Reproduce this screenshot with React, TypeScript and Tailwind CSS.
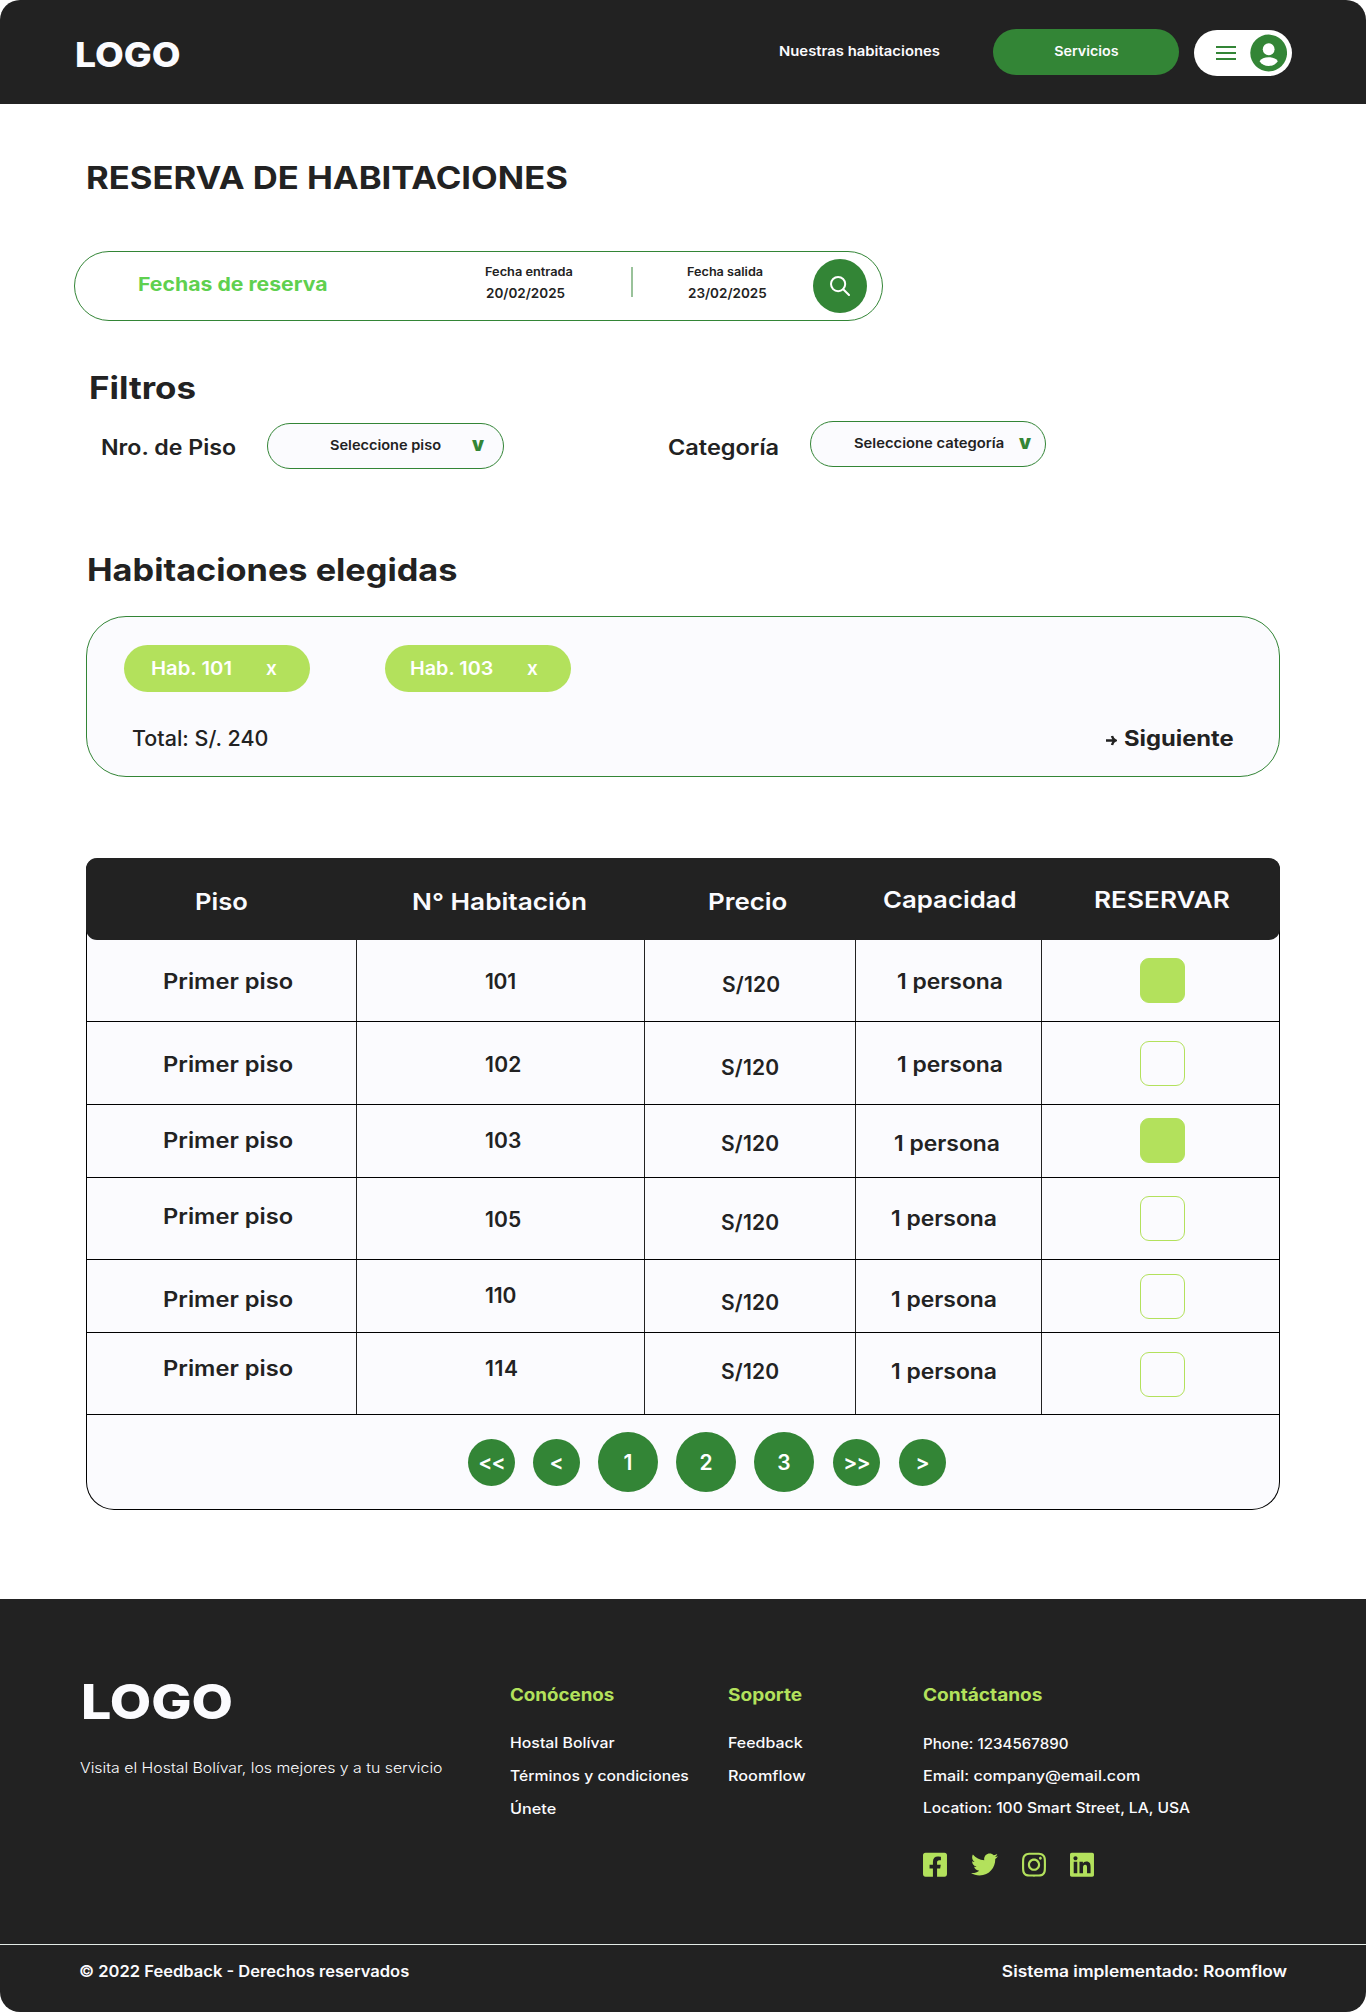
import React from "react";
import { FaFacebookSquare, FaTwitter, FaInstagram, FaLinkedin } from "react-icons/fa";

/* Text set slightly extended, growing from its left edge. */
function Wide({ className, children }: { className: string; children: React.ReactNode }) {
  return <span className={`inline-block w-max origin-left ${className}`}>{children}</span>;
}

function Header() {
  return (
    <header className="flex h-[104px] items-start rounded-t-[20px] bg-[#222222] text-[#fbfbfe]">
      <div className="mt-[37px] w-[704px] pl-[75px] text-[34.5px] leading-9 font-extrabold">
        <Wide className="scale-x-[1.08]">LOGO</Wide>
      </div>
      <a className="mt-[41px] ml-[75px] w-[214px] text-[13.5px] leading-5 font-semibold">
        <Wide className="scale-x-[1.1]">Nuestras habitaciones</Wide>
      </a>
      <button className="mt-[29px] flex h-[46px] w-[186px] items-center justify-center rounded-full bg-[#338536] pb-0.5 text-[13.5px] leading-5 font-semibold">
        <span className="scale-x-[1.06]">Servicios</span>
      </button>
      <div className="mt-[30px] ml-[15px] flex h-[46px] w-[98px] items-center rounded-full bg-white pr-[5px] pl-[22px]">
        <span className="flex w-5 flex-col gap-1">
          <span className="h-0.5 bg-[#338536]" />
          <span className="h-0.5 bg-[#338536]" />
          <span className="h-0.5 bg-[#338536]" />
        </span>
        <svg className="ml-3.5 size-[38px]" viewBox="0 0 38 38">
          <circle cx="19" cy="19" r="18.7" fill="#338536" />
          <circle cx="19" cy="15.2" r="6" fill="#fff" />
          <path d="M9.7 27.4c1.6-2.6 5-4 9.300-4s7.700 1.400 9.300 4c-2 3-5.400 4.800-9.300 4.800s-7.300-1.800-9.300-4.800z" fill="#fff" />
        </svg>
      </div>
    </header>
  );
}

function SearchBar() {
  return (
    <div className="mt-[57px] ml-[74px] flex h-[70px] w-[809px] items-start rounded-full border border-[#338536] pl-[63px]">
      <div className="mt-[23px] w-[347px] text-[19px] leading-5 font-bold text-[#5fd04f]">
        <Wide className="scale-x-[1.117]">Fechas de reserva</Wide>
      </div>
      <div className="mt-3 flex w-[146px] flex-col gap-[5px] leading-4 font-semibold">
        <Wide className="scale-x-[1.11] text-[11.5px]">Fecha entrada</Wide>
        <span className="pl-px text-[13.5px]">20/02/2025</span>
      </div>
      <span className="mt-[15px] h-[30px] w-0.5 bg-[#338536]/50" />
      <div className="mt-3 ml-[54px] flex w-[126px] flex-col gap-[5px] leading-4 font-semibold">
        <Wide className="scale-x-[1.1] text-[11.5px]">Fecha salida</Wide>
        <span className="pl-px text-[13.5px]">23/02/2025</span>
      </div>
      <button className="mt-[7px] flex size-[54px] items-center justify-center rounded-full bg-[#338536]">
        <svg className="size-5" viewBox="0 0 20 20" fill="none" stroke="#fff" strokeWidth="2" strokeLinecap="round">
          <circle cx="8.1" cy="8.1" r="7.1" />
          <path d="M13.200 13.200L19 19" />
        </svg>
      </button>
    </div>
  );
}

function Filters() {
  return (
    <div className="mt-[17px] flex h-12 items-start pl-[101px]">
      <div className="mt-[15px] w-[166px] text-[21px] leading-6 font-semibold">
        <Wide className="scale-x-[1.104]">Nro. de Piso</Wide>
      </div>
      <button className="mt-0.5 flex h-[46px] w-[237px] items-start rounded-full border border-[#338536] bg-[#fbfbfe] pl-[62px] text-left leading-5">
        <div className="mt-[11px] w-[142px] text-[13.5px] font-semibold">
          <Wide className="scale-x-[1.078]">Seleccione piso</Wide>
        </div>
        <span className="mt-[11px] text-[19px] font-black text-[#338536]">v</span>
      </button>
      <div className="mt-[15px] ml-[164px] w-[142px] text-[21px] leading-6 font-semibold">
        <Wide className="scale-x-[1.12]">Categoría</Wide>
      </div>
      <button className="flex h-[46px] w-[236px] items-start rounded-full border border-[#338536] bg-[#fbfbfe] pl-[43px] text-left leading-5">
        <div className="mt-[11px] w-[165px] text-[13.5px] font-semibold">
          <Wide className="scale-x-[1.094]">Seleccione categoría</Wide>
        </div>
        <span className="mt-[11px] text-[19px] font-black text-[#338536]">v</span>
      </button>
    </div>
  );
}

function Selection() {
  return (
    <section className="mx-[86px] mt-[30px] h-[161px] rounded-[40px] border border-[#338536] bg-[#fbfbfe] pt-7">
      <div className="flex gap-[75px] pl-[37px] text-[19px] leading-5 font-semibold text-white">
        <div className="flex h-[47px] w-[186px] items-center rounded-full bg-[#b3e15c] pt-px pl-[27px]">
          <div className="w-[115px]">
            <Wide className="scale-x-[1.066]">Hab. 101</Wide>
          </div>
          <span>x</span>
        </div>
        <div className="flex h-[47px] w-[186px] items-center rounded-full bg-[#b3e15c] pt-px pl-[25px]">
          <div className="w-[117px]">
            <Wide className="scale-x-[1.04]">Hab. 103</Wide>
          </div>
          <span>x</span>
        </div>
      </div>
      <div className="mt-[35px] flex items-center justify-between pr-11 pl-[45px] text-[21px] leading-6">
        <Wide className="scale-x-[1.022] font-medium">Total: S/. 240</Wide>
        <a className="flex items-center gap-[7px] font-bold">
          <svg className="mt-0.5 size-[11px]" viewBox="0 0 11 11" fill="none" stroke="#222222" strokeWidth="2.4">
            <path d="M0 5.500H9.500M6 1C6.600 3.200 7.700 4.700 9.700 5.500C7.700 6.300 6.600 7.800 6 10" />
          </svg>
          <div className="w-[111px]">
            <Wide className="scale-x-[1.13]">Siguiente</Wide>
          </div>
        </a>
      </div>
    </section>
  );
}

type Row = {
  height: string;
  floor: string;
  room: string;
  roomBox: string;
  price: string;
  capacity: string;
  checkBox: string;
  checked?: boolean;
};

const rows: Row[] = [
  { height: "h-[82px]", floor: "pt-8", room: "101", roomBox: "pt-8 tracking-[-0.3px]", price: "pt-[35px] pl-[77px]", capacity: "pt-8 pl-[41px]", checkBox: "pt-[18px]", checked: true },
  { height: "h-[83px]", floor: "pt-[33px]", room: "102", roomBox: "pt-[33px] tracking-[0.3px]", price: "pt-9 pl-[76px]", capacity: "pt-[33px] pl-[41px]", checkBox: "pt-[19px]" },
  { height: "h-[73px]", floor: "pt-[26px]", room: "103", roomBox: "pt-[26px] tracking-[0.1px]", price: "pt-[29px] pl-[76px]", capacity: "pt-[29px] pl-[38px]", checkBox: "pt-[13px]", checked: true },
  { height: "h-[82px]", floor: "pt-[29px]", room: "105", roomBox: "pt-8 tracking-[0.1px]", price: "pt-[35px] pl-[76px]", capacity: "pt-[31px] pl-[35px]", checkBox: "pt-[18px]" },
  { height: "h-[73px]", floor: "pt-[30px]", room: "110", roomBox: "pt-[26px] tracking-[-0.1px]", price: "pt-[33px] pl-[76px]", capacity: "pt-[30px] pl-[35px]", checkBox: "pt-3.5" },
  { height: "h-[82px]", floor: "pt-[26px]", room: "114", roomBox: "pt-[26px] tracking-[0.6px]", price: "pt-[29px] pl-[76px]", capacity: "pt-[29px] pl-[35px]", checkBox: "pt-[19px]" },
];

const pages = [
  { label: "<<", style: "size-[47px] tracking-[-1px]" },
  { label: "<", style: "ml-[18px] size-[47px]" },
  { label: "1", style: "ml-[18px] size-[60px]" },
  { label: "2", style: "ml-[18px] size-[60px]" },
  { label: "3", style: "ml-[18px] size-[60px]" },
  { label: ">>", style: "ml-[19px] size-[47px] tracking-[-1px]" },
  { label: ">", style: "ml-[19px] size-[47px]" },
];

function RoomTable() {
  return (
    <section className="mx-[86px] mt-[81px] h-[652px] rounded-t-[12px] rounded-b-[28px] border-x border-b border-black bg-[#fbfbfe]">
      <div className="-mx-px flex h-[82px] rounded-[11px] bg-[#222222] text-[23px] leading-6 font-semibold text-[#fbfbfe]">
        <div className="w-[271px] pt-8 pl-[109px]">
          <Wide className="scale-x-[1.11]">Piso</Wide>
        </div>
        <div className="w-72 pt-8 pl-[55px]">
          <Wide className="scale-x-[1.14]">N° Habitación</Wide>
        </div>
        <div className="w-[211px] pt-8 pl-[63px]">
          <Wide className="scale-x-[1.125]">Precio</Wide>
        </div>
        <div className="w-[186px] pt-[30px] pl-[27px]">
          <Wide className="scale-x-[1.12]">Capacidad</Wide>
        </div>
        <div className="pt-[30px] pl-[52px]">
          <Wide className="scale-x-[1.14]">RESERVAR</Wide>
        </div>
      </div>
      {rows.map((r) => (
        <div key={r.room} className={`flex border-b border-black text-[21px] leading-5 font-semibold ${r.height}`}>
          <div className={`w-[270px] border-r border-[#222222] pl-[76px] ${r.floor}`}>
            <Wide className="scale-x-[1.127]">Primer piso</Wide>
          </div>
          <div className={`w-72 border-r border-[#222222] pl-32 ${r.roomBox}`}>{r.room}</div>
          <div className={`w-[211px] border-r border-[#222222] tracking-[0.18px] ${r.price}`}>S/120</div>
          <div className={`w-[186px] border-r border-[#222222] ${r.capacity}`}>
            <Wide className="scale-x-[1.09]">1 persona</Wide>
          </div>
          <div className={`pl-[98px] ${r.checkBox}`}>
            <div className={`size-[45px] rounded-[9px] border border-[#b3e15c] ${r.checked ? "bg-[#b3e15c]" : ""}`} />
          </div>
        </div>
      ))}
      <div className="flex h-[94px] items-center pl-[381px] text-[21px] leading-6 font-semibold text-white">
        {pages.map((p) => (
          <button key={p.label} className={`flex shrink-0 items-center justify-center rounded-full bg-[#338536] pt-px ${p.style}`}>
            {p.label}
          </button>
        ))}
      </div>
    </section>
  );
}

function Footer() {
  return (
    <footer className="mt-[89px] h-[413px] rounded-b-[20px] bg-[#222222] text-[#fbfbfe]">
      <div className="flex h-[345px] items-start pl-20 text-[14.5px] leading-5 font-medium">
        <div className="w-[430px] pt-[79px]">
          <div className="pl-px text-[48px] leading-[48px] font-extrabold">
            <Wide className="scale-x-[1.117]">LOGO</Wide>
          </div>
          <p className="mt-8 font-light">
            <Wide className="scale-x-[1.093]">Visita el Hostal Bolívar, los mejores y a tu servicio</Wide>
          </p>
        </div>
        <div className="flex w-[218px] flex-col pt-[86px]">
          <h3 className="text-[17.5px] font-bold text-[#b3e15c]">
            <Wide className="scale-x-[1.07]">Conócenos</Wide>
          </h3>
          <Wide className="mt-7 scale-x-[1.092]">Hostal Bolívar</Wide>
          <Wide className="mt-[13px] scale-x-[1.085]">Términos y condiciones</Wide>
          <Wide className="mt-[13px] scale-x-[1.12]">Únete</Wide>
        </div>
        <div className="flex w-[195px] flex-col pt-[86px]">
          <h3 className="text-[17.5px] font-bold text-[#b3e15c]">
            <Wide className="scale-x-[1.089]">Soporte</Wide>
          </h3>
          <Wide className="mt-7 scale-x-[1.1]">Feedback</Wide>
          <Wide className="mt-[13px] scale-x-[1.12]">Roomflow</Wide>
        </div>
        <div className="flex flex-col pt-[86px]">
          <h3 className="text-[17.5px] font-bold text-[#b3e15c]">
            <Wide className="scale-x-[1.09]">Contáctanos</Wide>
          </h3>
          <Wide className="mt-[29px] scale-x-[1.042]">Phone: 1234567890</Wide>
          <Wide className="mt-3 scale-x-[1.113]">Email: company@email.com</Wide>
          <Wide className="mt-3 scale-x-[1.075]">Location: 100 Smart Street, LA, USA</Wide>
          <div className="mt-[33px] flex items-center gap-6 text-[#b3e15c]">
            <FaFacebookSquare className="h-[27.4px] w-6" />
            <FaTwitter className="h-[27px] w-[27px]" />
            <FaInstagram className="h-[27.4px] w-6" />
            <FaLinkedin className="h-[27.4px] w-6" />
          </div>
        </div>
      </div>
      <div className="flex justify-between border-t border-[#e3ebe6] pt-[17px] pr-[79px] pl-[79px] text-[15.4px] leading-5 font-semibold">
        <Wide className="scale-x-[1.074]">© 2022 Feedback - Derechos reservados</Wide>
        <span className="origin-right scale-x-[1.127]">Sistema implementado: Roomflow</span>
      </div>
    </footer>
  );
}

export default function App() {
  return (
    <div className="w-[1366px] bg-white font-[Inter,sans-serif] whitespace-nowrap text-[#222222]">
      <Header />
      <main className="pt-[58px]">
        <h1 className="ml-[86px] text-[31px] leading-8 font-bold">
          <Wide className="scale-x-[1.117]">RESERVA DE HABITACIONES</Wide>
        </h1>
        <SearchBar />
        <h2 className="mt-[51px] ml-[89px] text-[31px] leading-8 font-bold">
          <Wide className="scale-x-[1.126]">Filtros</Wide>
        </h2>
        <Filters />
        <h2 className="mt-[85px] ml-[87px] text-[31px] leading-8 font-bold">
          <Wide className="scale-x-[1.106]">Habitaciones elegidas</Wide>
        </h2>
        <Selection />
        <RoomTable />
      </main>
      <Footer />
    </div>
  );
}
